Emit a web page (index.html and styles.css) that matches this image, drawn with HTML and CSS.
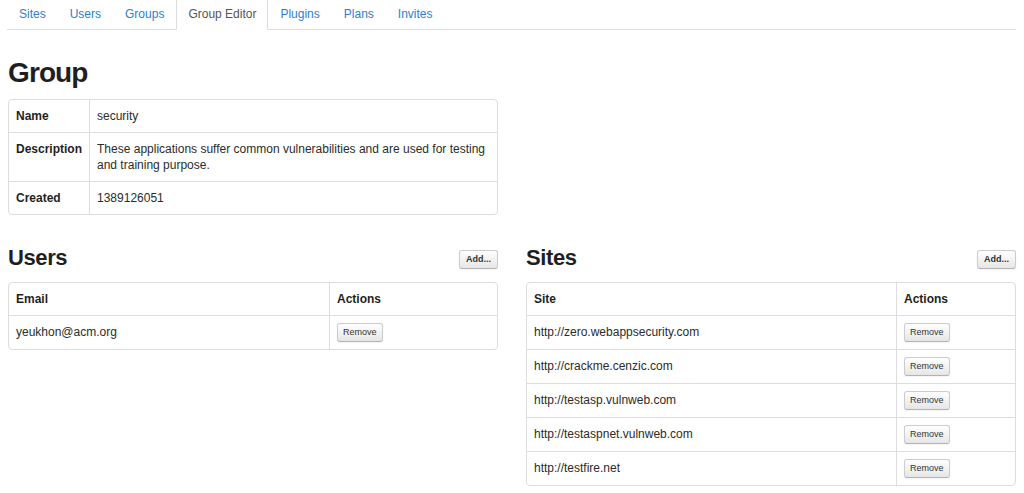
FILE: index.html
```html
<!DOCTYPE html>
<html>
<head>
<meta charset="utf-8">
<link rel="stylesheet" href="styles.css">
</head>
<body>
<div class="container">
  <ul class="tabs">
    <li><a href="#">Sites</a></li>
    <li><a href="#">Users</a></li>
    <li><a href="#">Groups</a></li>
    <li class="active"><a href="#">Group Editor</a></li>
    <li><a href="#">Plugins</a></li>
    <li><a href="#">Plans</a></li>
    <li><a href="#">Invites</a></li>
  </ul>

  <h2 class="page-title">Group</h2>
  <div class="row">
    <table class="grid-table info-table">
      <tbody>
        <tr><th>Name</th><td>security</td></tr>
        <tr><th>Description</th><td>These applications suffer common vulnerabilities and are used for testing and training purpose.</td></tr>
        <tr><th>Created</th><td>1389126051</td></tr>
      </tbody>
    </table>
  </div>

  <div class="row lists">
    <section class="panel">
      <div class="panel-head">
        <h3>Users</h3>
        <button class="btn btn-add">Add...</button>
      </div>
      <table class="grid-table">
        <thead>
          <tr><th>Email</th><th class="col-actions users-actions">Actions</th></tr>
        </thead>
        <tbody>
          <tr><td>yeukhon@acm.org</td><td class="act"><button class="btn">Remove</button></td></tr>
        </tbody>
      </table>
    </section>
    <section class="panel">
      <div class="panel-head">
        <h3>Sites</h3>
        <button class="btn btn-add">Add...</button>
      </div>
      <table class="grid-table">
        <thead>
          <tr><th>Site</th><th class="col-actions sites-actions">Actions</th></tr>
        </thead>
        <tbody>
          <tr><td>http://zero.webappsecurity.com</td><td class="act"><button class="btn">Remove</button></td></tr>
          <tr><td>http://crackme.cenzic.com</td><td class="act"><button class="btn">Remove</button></td></tr>
          <tr><td>http://testasp.vulnweb.com</td><td class="act"><button class="btn">Remove</button></td></tr>
          <tr><td>http://testaspnet.vulnweb.com</td><td class="act"><button class="btn">Remove</button></td></tr>
          <tr><td>http://testfire.net</td><td class="act"><button class="btn">Remove</button></td></tr>
        </tbody>
      </table>
    </section>
  </div>
</div>
</body>
</html>
```

FILE: styles.css
```css
html, body {
  margin: 0;
  padding: 0;
  background: #fff;
}
body {
  font-family: "Liberation Sans", Arial, sans-serif;
  font-size: 12px;
  line-height: 16px;
  color: #2b2b2b;
}
.container {
  padding: 0 8px;
}
.tabs {
  list-style: none;
  margin: -2px 0 0 -1px;
  padding: 0;
  display: flex;
  border-bottom: 1px solid #ddd;
}
.tabs li {
  margin-bottom: -1px;
}
.tabs a {
  display: block;
  padding: 8px 11px 7px;
  line-height: 15px;
  font-size: 12px;
  color: #2a81d2;
  text-decoration: none;
  border: 1px solid transparent;
  border-radius: 4px 4px 0 0;
}
.tabs .active a {
  color: #555;
  border-color: #ddd #ddd transparent #ddd;
  background: #fff;
}
.page-title {
  font-size: 28px;
  line-height: 34px;
  font-weight: bold;
  color: #1f1f1f;
  margin: 26px 0 9px;
  letter-spacing: -0.9px;
}
.row {
  display: grid;
  grid-template-columns: 1fr 1fr;
  column-gap: 28px;
}
.grid-table {
  width: 100%;
  border-collapse: separate;
  border-spacing: 0;
  border: 1px solid #ddd;
  border-radius: 4px;
}
.grid-table th,
.grid-table td {
  text-align: left;
  vertical-align: top;
  padding: 8px 7px;
  border-top: 1px solid #ddd;
  border-left: 1px solid #ddd;
}
.grid-table th {
  font-weight: bold;
  color: #1f1f1f;
}
.grid-table tr:first-child > th,
.grid-table tr:first-child > td {
  border-top: 0;
}
.grid-table thead + tbody tr:first-child > td {
  border-top: 1px solid #ddd;
}
.grid-table tr > :first-child {
  border-left: 0;
}
.grid-table td.act {
  padding-top: 7px;
  padding-bottom: 7px;
}
.info-table th {
  width: 66px;
}
.lists {
  margin-top: 29px;
}
.panel-head {
  display: flex;
  align-items: center;
  justify-content: space-between;
  margin-bottom: 10px;
}
.panel-head h3 {
  margin: 0;
  font-size: 22px;
  line-height: 28px;
  font-weight: bold;
  color: #1f1f1f;
  letter-spacing: -0.4px;
}
.users-actions {
  width: 153px;
}
.sites-actions {
  width: 104px;
}
.btn {
  display: inline-block;
  font-family: "Liberation Sans", Arial, sans-serif;
  font-size: 9px;
  line-height: 11px;
  height: 19px;
  padding: 3px 5px;
  box-sizing: border-box;
  color: #333;
  background: linear-gradient(#ffffff, #e6e6e6);
  border: 1px solid #cccccc;
  border-bottom-color: #b3b3b3;
  border-radius: 3px;
  box-shadow: inset 0 1px 0 rgba(255,255,255,.2), 0 1px 2px rgba(0,0,0,.05);
  vertical-align: top;
  margin: 0;
}
.btn-add {
  font-weight: bold;
  padding: 3px 6px;
  margin-top: 3px;
}
```
